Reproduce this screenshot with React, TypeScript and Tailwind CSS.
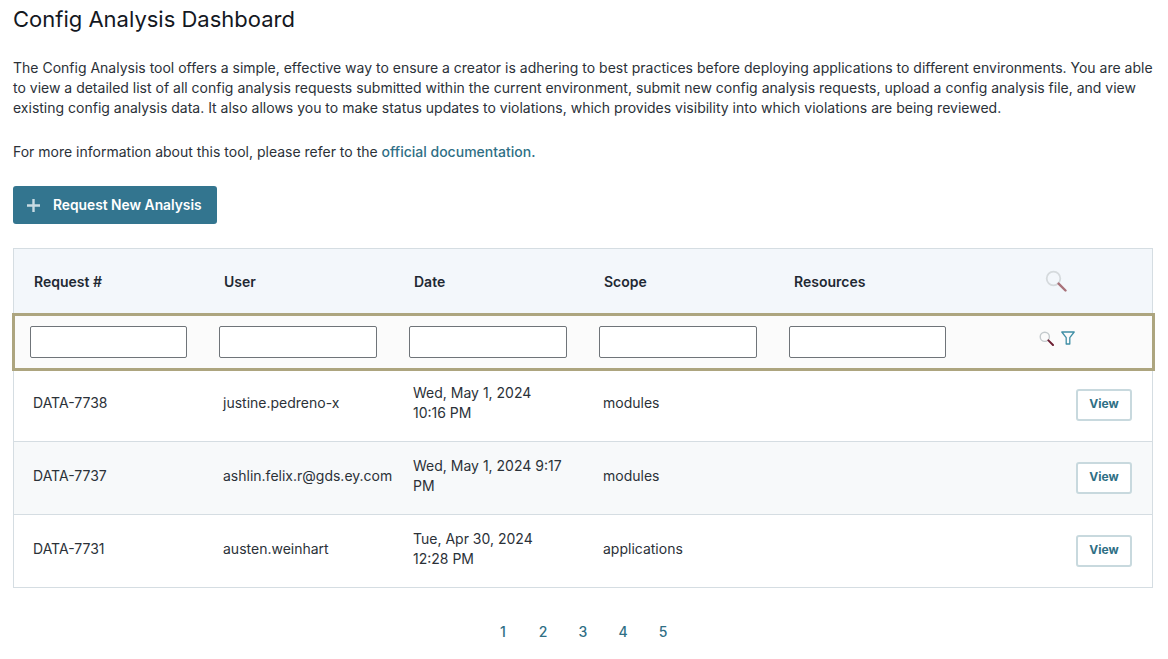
const rows = [
  { id: "DATA-7738", user: "justine.pedreno-x", date: "Wed, May 1, 2024 10:16 PM", scope: "modules" },
  { id: "DATA-7737", user: "ashlin.felix.r@gds.ey.com", date: "Wed, May 1, 2024 9:17 PM", scope: "modules" },
  { id: "DATA-7731", user: "austen.weinhart", date: "Tue, Apr 30, 2024 12:28 PM", scope: "applications" },
];

function Magnifier({ className }: { className: string }) {
  return (
    <svg viewBox="0 0 22 22" fill="none" className={className}>
      <circle cx="8.5" cy="8.5" r="6.8" stroke="#d5dadd" strokeWidth="1.8" />
      <path d="M13.6 13.6 20.5 20.5" stroke="#a8727a" strokeWidth="2.4" strokeLinecap="round" />
    </svg>
  );
}

function SmallMagnifier() {
  return (
    <svg viewBox="0 0 15 15" fill="none" className="h-[15px] w-[15px]">
      <circle cx="5.8" cy="5.8" r="4.6" stroke="#c4cacd" strokeWidth="1.4" />
      <path d="M9.4 9.4 14 14" stroke="#6d1f33" strokeWidth="2" strokeLinecap="round" />
    </svg>
  );
}

function Funnel() {
  return (
    <svg viewBox="0 0 14 14" fill="none" className="h-[14px] w-[14px]">
      <path d="M.8 1h12.4L8.8 6.6V13H5.2V6.6Z" stroke="#3f8ea5" strokeWidth="1.3" strokeLinejoin="round" />
    </svg>
  );
}

export default function App() {
  return (
    <div className="h-[659px] w-[1168px] overflow-hidden bg-white pl-[13px] pr-[15px] font-['Inter',sans-serif] text-[#1f2933]">
      <h1 className="pt-[4px] text-[22px] leading-[30px] text-[#14181f]">Config Analysis Dashboard</h1>
      <p className="mt-[24px] text-[14px] leading-5 text-[#2b3138]">
        The Config Analysis tool offers a simple, effective way to ensure a creator is adhering to best practices before deploying applications to different environments. You are able to view a detailed list of all config analysis requests submitted within the current environment, submit new config analysis requests, upload a config analysis file, and view existing config analysis data. It also allows you to make status updates to violations, which provides visibility into which violations are being reviewed.
      </p>
      <p className="mt-[24px] text-[14px] leading-5 text-[#2b3138]">
        For more information about this tool, please refer to the{" "}
        <a href="#" className="font-medium text-[#2f6f85]">official documentation.</a>
      </p>
      <button className="mt-6 flex h-[38px] w-[204px] items-center rounded-[3px] bg-[#33758f] pl-[14px] text-[13.8px] font-semibold text-white">
        <svg viewBox="0 0 14 14" className="mr-[13px] h-[13px] w-[13px]" stroke="#c9dbe3" strokeWidth="2.6">
          <path d="M7 0v14M0 7h14" />
        </svg>
        Request New Analysis
      </button>

      <div className="mt-6 w-[1140px] border border-[#d5dde2]">
        <div className="flex h-[65px] items-center bg-[#f3f7fb] text-[14px] font-semibold">
          {["Request #", "User", "Date", "Scope", "Resources"].map((h) => (
            <div key={h} className="w-[190px] pl-5">{h}</div>
          ))}
          <div className="ml-[81px] pb-[2px]"><Magnifier className="h-[22px] w-[22px]" /></div>
        </div>

        <div className="relative z-10 -mt-px -mb-[3px] -ml-[2px] -mr-[3px] flex h-[58px] items-center border-[3px] border-[#ada57f] bg-[#fbfbfb] pl-[14.6px]">
          {[0, 1, 2, 3, 4].map((i) => (
            <div key={i} className="w-[189.75px]">
              <input className="block h-[32px] w-[157.7px] rounded-[2px] border border-[#6f7479] bg-white" />
            </div>
          ))}
          <div className="flex items-center gap-[7px] pb-2 pl-[61px]">
            <SmallMagnifier />
            <Funnel />
          </div>
        </div>

        {rows.map((r, i) => (
          <div key={r.id} className={`flex h-[73px] items-center border-t text-[14px] leading-5 text-[#2b3138] ${i === 1 ? "bg-[#f7f9fa]" : "bg-white"} ${i > 0 ? "border-[#d5dde2]" : "border-transparent"}`}>
            <div className="w-[190px] pb-1 pl-[19px]">{r.id}</div>
            <div className="w-[190px] whitespace-nowrap pb-1 pl-[19px]">{r.user}</div>
            <div className="w-[190px] pb-1 pl-[19px] pr-[18px]">{r.date}</div>
            <div className="w-[190px] pb-1 pl-[19px]">{r.scope}</div>
            <div className="flex flex-1 justify-end pr-5">
              <button className="h-[32px] w-[56px] rounded-[3px] border-2 border-[#c8d9de] bg-white pb-[2px] text-[12px] font-bold text-[#2f6f85]">View</button>
            </div>
          </div>
        ))}
      </div>

      <div className="mt-[34px] flex justify-center gap-[30px] text-[14px] font-medium leading-5 text-[#2f6f85]">
        {[1, 2, 3, 4, 5].map((n) => (
          <a key={n} href="#" className="w-[10px] text-center">{n}</a>
        ))}
      </div>
    </div>
  );
}
